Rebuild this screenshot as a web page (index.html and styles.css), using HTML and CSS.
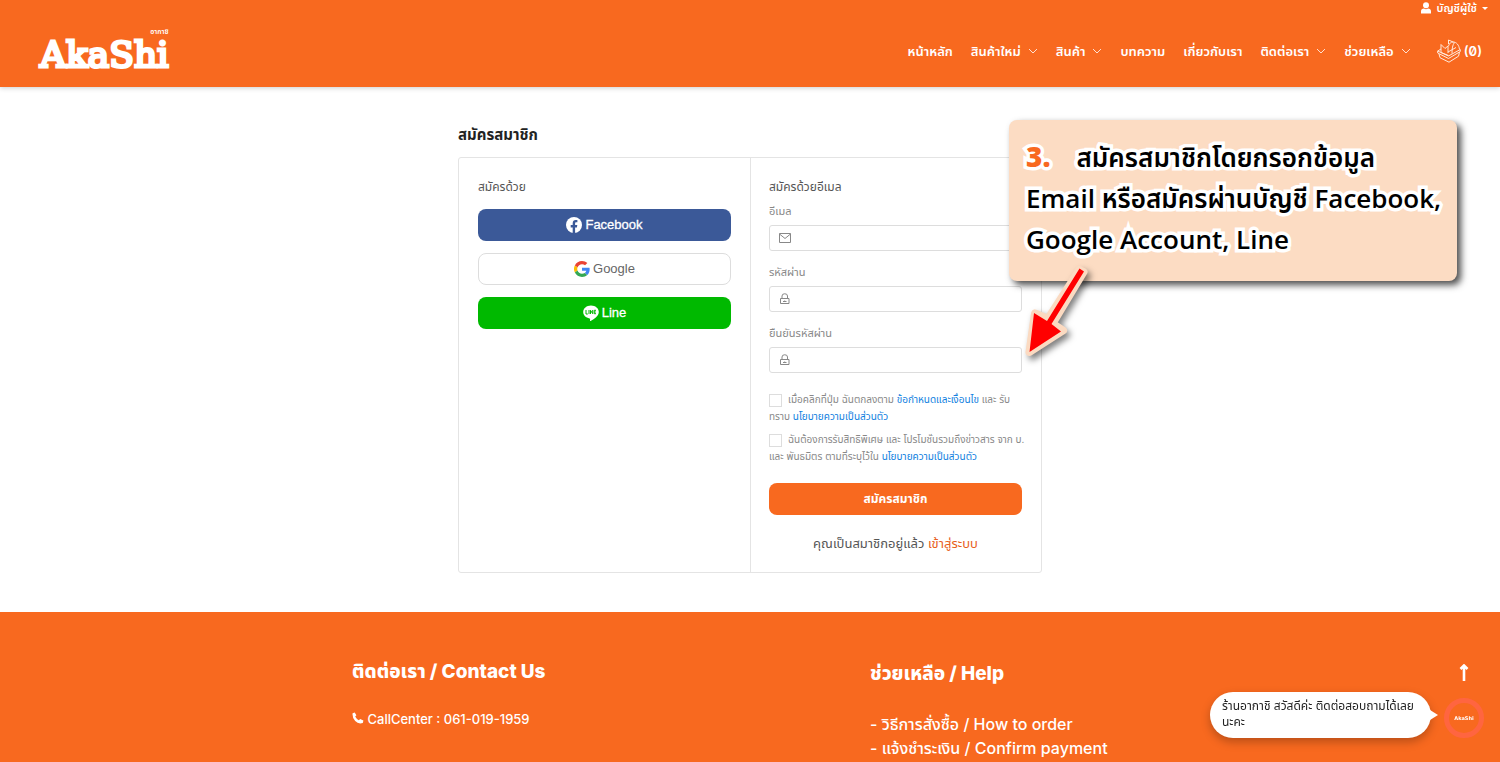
FILE: index.html
```html
<!DOCTYPE html>
<html lang="th">
<head>
<meta charset="utf-8">
<meta name="viewport" content="width=device-width, initial-scale=1">
<title>AkaShi - สมัครสมาชิก</title>
<link rel="stylesheet" href="styles.css">
</head>
<body>
<header class="header">
  <button class="account" type="button">
    <svg width="12" height="12" viewBox="0 0 12 12" fill="#fff"><circle cx="6" cy="3.2" r="3"/><path d="M1 11.6V9.4C1 7.6 2.2 6.6 4 6.6q2 1.1 4 0c1.800 0 3 1 3 2.800v2.200z"/></svg>
    <span>บัญชีผู้ใช้</span>
    <span class="caret"></span>
  </button>
  <div class="bar">
    <a class="logo" href="#"><span class="logo-small">อากาชิ</span><span class="logo-name">AkaShi</span></a>
    <nav class="nav">
      <a href="#">หน้าหลัก</a>
      <a href="#">สินค้าใหม่ <svg class="chev" viewBox="0 0 10 6"><path d="M1 1l4 4 4-4"/></svg></a>
      <a href="#">สินค้า <svg class="chev" viewBox="0 0 10 6"><path d="M1 1l4 4 4-4"/></svg></a>
      <a href="#">บทความ</a>
      <a href="#">เกี่ยวกับเรา</a>
      <a href="#">ติดต่อเรา <svg class="chev" viewBox="0 0 10 6"><path d="M1 1l4 4 4-4"/></svg></a>
      <a href="#">ช่วยเหลือ <svg class="chev" viewBox="0 0 10 6"><path d="M1 1l4 4 4-4"/></svg></a>
      <a class="cart" href="#"><svg width="24" height="24" viewBox="0 0 24 24" fill="none" stroke="#ffe9dc" stroke-width="1" stroke-linejoin="round"><path d="M.7 12L11.500 17 23.300 10.500v2L11.500 19.500.7 14zM2 15l1 3.700 9 4.500 9.500-6 1-4M.7 12L4 10M4 13.500V5.500l4 4 3-2.500V14M4 13.500l7.500 3M11.500 7C12.500 4 14 3 16 3c3.500 0 6 3 6.500 7.500M11.500 1l5 2.200M11.500 1v4M15 14.500c0-5 .5-8.500 2.500-11M11 13l8-4.500"/></svg><span>(0)</span></a>
    </nav>
  </div>
</header>

<main class="main">
  <div class="signup">
    <h1 class="title">สมัครสมาชิก</h1>
    <div class="panel">
      <section class="social">
        <h2 class="subtitle">สมัครด้วย</h2>
        <button class="btn facebook" type="button">
          <svg width="16" height="16" viewBox="0 0 16 16"><circle cx="8" cy="8" r="8" fill="#fff"/><path fill="#3b5998" d="M6.700 16v-5.600H4.700V8h2V6.300c0-2.100 1.200-3.200 3-3.200.9 0 1.700.1 1.700.1v2h-1c-1 0-1.300.6-1.300 1.200V8h2.200l-.4 2.400H9.100V16z"/></svg>
          <span>Facebook</span>
        </button>
        <button class="btn google" type="button">
          <svg width="16" height="16" viewBox="0 0 48 48"><path fill="#EA4335" d="M24 9.500c3.540 0 6.710 1.220 9.210 3.600l6.850-6.850C35.900 2.380 30.470 0 24 0 14.620 0 6.510 5.380 2.560 13.220l7.980 6.190C12.430 13.720 17.740 9.500 24 9.500z"/><path fill="#4285F4" d="M46.980 24.550c0-1.570-.15-3.090-.38-4.550H24v9.020h12.940c-.58 2.960-2.260 5.480-4.780 7.180l7.730 6c4.510-4.180 7.090-10.360 7.090-17.650z"/><path fill="#FBBC05" d="M10.530 28.590a14.500 14.500 0 0 1 0-9.180l-7.980-6.190a24 24 0 0 0 0 21.560z"/><path fill="#34A853" d="M24 48c6.480 0 11.930-2.130 15.890-5.810l-7.730-6c-2.150 1.450-4.920 2.300-8.160 2.300-6.260 0-11.570-4.220-13.470-9.910l-7.980 6.190C6.510 42.620 14.620 48 24 48z"/></svg>
          <span>Google</span>
        </button>
        <button class="btn line" type="button">
          <svg width="16" height="16" viewBox="0 0 16 16"><path fill="#fff" d="M8 .5C3.600.5.200 3.400.200 7c0 3.200 2.700 5.800 6.400 6.400.8.2.4 1.300.4 2.200 0 .5.300.5.700.3 2.900-1.600 8.100-4.500 8.100-8.900C15.800 3.400 12.400.5 8 .5z"/><path fill="none" stroke="#00b900" d="M3 5v4h1.800M6 5v4M7.500 9V5.300L9.700 8.700V5M13 5.300h-1.800v3.400H13M11.200 7h1.600"/></svg>
          <span>Line</span>
        </button>
      </section>
      <form class="form">
        <h2 class="subtitle">สมัครด้วยอีเมล</h2>
        <label class="label" for="email">อีเมล</label>
        <div class="field">
          <svg width="12" height="12" viewBox="0 0 12 12"><path d="M.5 1.500h11v9H.5zM.5 2L6 6.500 11.500 2"/></svg>
          <input id="email" type="email">
        </div>
        <label class="label" for="pass">รหัสผ่าน</label>
        <div class="field">
          <svg width="12" height="12" viewBox="0 0 12 12"><path d="M1.500 5.500h8.500v5H1.500zM3 5.500V3a2.700 2.200 0 0 1 5.500 0v2.500M4 8.500h3.500M5.700 7.500v1.500"/></svg>
          <input id="pass" type="password">
        </div>
        <label class="label" for="pass2">ยืนยันรหัสผ่าน</label>
        <div class="field">
          <svg width="12" height="12" viewBox="0 0 12 12"><path d="M1.500 5.500h8.500v5H1.500zM3 5.500V3a2.700 2.200 0 0 1 5.500 0v2.500M4 8.500h3.500M5.700 7.500v1.500"/></svg>
          <input id="pass2" type="password">
        </div>
        <div class="consents">
          <p class="consent"><input type="checkbox" id="terms"><label for="terms">เมื่อคลิกที่ปุ่ม ฉันตกลงตาม <a href="#">ข้อกำหนดและเงื่อนไข</a> และ รับ<br>ทราบ <a href="#">นโยบายความเป็นส่วนตัว</a></label></p>
          <p class="consent"><input type="checkbox" id="promo"><label for="promo">ฉันต้องการรับสิทธิพิเศษ และ โปรโมชั่นรวมถึงข่าวสาร จาก บ.<br>และ พันธมิตร ตามที่ระบุไว้ใน <a href="#">นโยบายความเป็นส่วนตัว</a></label></p>
        </div>
        <button class="btn submit" type="submit">สมัครสมาชิก</button>
        <p class="login">คุณเป็นสมาชิกอยู่แล้ว <a href="#">เข้าสู่ระบบ</a></p>
      </form>
    </div>
  </div>
  <aside class="callout">
    <p><b>3.</b>สมัครสมาชิกโดยกรอกข้อมูล<br>Email หรือสมัครผ่านบัญชี Facebook,<br>Google Account, Line</p>
    <svg class="arrow" width="80" height="100" viewBox="0 0 80 100"><path d="M61.500 8L30 57 17 51.500 11.500 90 45 68.500 34.500 61.500 65.500 10z" fill="#fbdac1" stroke="#fbdac1" stroke-width="8" stroke-linejoin="round"/><path d="M61.500 6.500L29 59 16 51 11.500 90 43 69.500 33.500 62 66 9.500z" fill="#f00"/></svg>
  </aside>
</main>

<footer class="footer">
  <section class="contact">
    <h3>ติดต่อเรา / Contact Us</h3>
    <a href="#"><svg width="12" height="12" viewBox="0 0 12 12" fill="#fff"><path d="M.6 1.200L2.700.4l1.700 2.900-1.200 1.300q1.200 2.400 3.600 3.700L8.200 7l3.200 1.600-.6 2.300Q6.500 12.500 3.200 8.900.1 5.700.6 1.200z"/></svg> CallCenter : 061-019-1959</a>
  </section>
  <section class="help">
    <h3>ช่วยเหลือ / Help</h3>
    <a href="#">- วิธีการสั่งซื้อ / How to order</a>
    <a href="#">- แจ้งชำระเงิน / Confirm payment</a>
  </section>
</footer>

<aside class="chat">
  <p class="bubble">ร้านอากาชิ สวัสดีค่ะ ติดต่อสอบถามได้เลยนะคะ</p>
  <div class="chat-side">
    <button class="top" type="button" aria-label="Top"><svg width="10" height="18" viewBox="0 0 10 18"><path d="M5 17V3M1.500 5L5 1.500 8.500 5" fill="none" stroke="#fff" stroke-width="2.600"/></svg></button>
    <button class="avatar" type="button">AkaShi</button>
  </div>
</aside>
</body>
</html>
```
FILE: styles.css
```css
* { box-sizing: border-box; }
body {
  margin: 0;
  min-height: 100vh;
  display: flex;
  flex-direction: column;
  background: #fff;
  color: #555;
  font: 12px/18px "Liberation Sans", "Noto Sans Thai", sans-serif;
}
h1, h2, h3, p { margin: 0; }
a { color: inherit; text-decoration: none; }
button { font: inherit; border: 0; padding: 0; background: none; color: inherit; cursor: pointer; }
svg { flex: none; }

.header {
  display: flex;
  flex-direction: column;
  height: 87px;
  background: #f8691f;
  box-shadow: 0 1px 5px rgba(0, 0, 0, .2);
  color: #fff;
  font-family: Inter, "Noto Sans Thai", sans-serif;
  font-weight: 600;
}
.account {
  align-self: flex-end;
  display: flex;
  align-items: center;
  gap: 5px;
  height: 16px;
  margin-right: 12px;
  font-size: 11px;
}
.caret { border: 3px solid transparent; border-top-color: #fff; border-bottom: 0; }
.bar {
  display: flex;
  justify-content: space-between;
  align-items: center;
  height: 70px;
  padding: 0 18px 0 40px;
}
.logo { display: flex; flex-direction: column; }
.logo-small { align-self: flex-end; font-size: 7px; line-height: 8px; }
.logo-name {
  font: 36px/38px "DejaVu Serif", serif;
  -webkit-text-stroke: 3px #fff;
}
.nav { display: flex; align-items: center; gap: 18px; font-size: 13px; }
.nav a { display: flex; align-items: center; gap: 7px; }
.chev { width: 10px; height: 6px; fill: none; stroke: #fff; stroke-width: 1; opacity: .8; }
.nav .cart { gap: 3px; margin-left: 8px; font-feature-settings: "zero"; }

.main { position: relative; padding: 38px 16px 39px; }
.signup { max-width: 584px; margin: 0 auto; }
.title { font-size: 15px; line-height: 20px; color: #222; }
.panel {
  display: grid;
  grid-template-columns: minmax(0, 1fr) minmax(0, 1fr);
  margin-top: 12px;
  border: 1px solid #e4e4e4;
  border-radius: 3px;
}
.social, .form { padding: 18px 19px; }
.form { border-left: 1px solid #e4e4e4; padding-left: 18px; }
.subtitle { font-size: 12px; line-height: 22px; font-weight: 400; color: #555; }
.btn {
  display: flex;
  align-items: center;
  justify-content: center;
  gap: 3px;
  width: 100%;
  height: 32px;
  margin-bottom: 12px;
  border-radius: 8px;
  color: #fff;
  font-size: 13px;
}
.social .subtitle { margin-bottom: 11px; }
.facebook { background: #3b5998; }
.google { border: 1px solid #ddd; color: #666; }
.line { background: #00b900; }
.facebook, .line { -webkit-text-stroke: 0.3px #fff; }
.label { display: block; height: 18px; margin: 4px 0 5px; font-size: 11px; color: #888; }
.field {
  display: flex;
  align-items: center;
  gap: 6px;
  height: 26px;
  margin-bottom: 12px;
  padding: 0 9px;
  border: 1px solid #ddd;
  border-radius: 3px;
}
.field svg { fill: none; stroke: #888; }
.field input { flex: 1; min-width: 0; border: 0; outline: 0; background: none; font: inherit; }
.consents { margin-top: 18px; font-size: 10px; line-height: 17px; color: #888; }
.consent { margin-bottom: 6px; white-space: nowrap; }
.consent input {
  appearance: none;
  width: 13px;
  height: 13px;
  margin: 0 6px 0 0;
  border: 1px solid #ddd;
  vertical-align: middle;
}
.consent a { color: #1080e0; }
.submit { margin: 18px 0 20px; background: #f8691f; font-size: 12px; font-weight: bold; }
.login { margin-bottom: 1px; font-size: 13px; text-align: center; }
.login a { color: #e8601c; }

.callout {
  position: absolute;
  top: 33px;
  right: 43px;
  width: 448px;
  height: 161px;
  padding: 16px 17px;
  border-radius: 8px;
  background: #fcdcc3;
  box-shadow: 4px 4px 7px rgba(0, 0, 0, .7);
  color: #000;
  font: 600 26px/41px "Open Sans", "Noto Sans Thai", sans-serif;
  white-space: nowrap;
}
.callout p { -webkit-text-stroke: 7px #fff; paint-order: stroke fill; }
.callout b { margin-right: 26px; color: #f8691f; font-size: 28px; }
.arrow { position: absolute; left: 9px; top: 142px; filter: drop-shadow(3px 4px 3px rgba(0, 0, 0, .5)); }

.footer {
  flex: 1;
  display: flex;
  padding: 48px 0 0 352px;
  background: #f8691f;
  color: #fff;
  font: 500 16px/24px Inter, "Noto Sans Thai", sans-serif;
}
.footer section { flex: 1 1 0; }
.footer .contact { flex: 0 0 518px; }
.footer h3 { font-size: 19px; line-height: 24px; font-weight: 800; }
.footer a { display: block; }
.contact a { margin-top: 23px; font-size: 13px; }
.help h3 { margin: 2px 0 26px; }

.chat {
  position: fixed;
  right: 16px;
  bottom: 24px;
  display: flex;
  align-items: flex-end;
  gap: 13px;
  color: #222;
}
.bubble {
  position: relative;
  width: 221px;
  padding: 6px 12px 8px;
  border-radius: 23px;
  background: #fff;
  box-shadow: 0 4px 10px rgba(0, 0, 0, .25);
  font-size: 12px;
  line-height: 16px;
}
.bubble::after {
  content: "";
  position: absolute;
  right: -7px;
  top: 18px;
  border: 5px solid transparent;
  border-left: 8px solid #fff;
  border-right: 0;
}
.chat-side { display: flex; flex-direction: column; align-items: center; gap: 16px; }
.top { height: 18px; }
.avatar {
  width: 40px;
  height: 40px;
  border: 5px solid #ff6540;
  border-radius: 50%;
  color: #fff;
  font: bold 5px/8px "DejaVu Sans", sans-serif;
}
```
